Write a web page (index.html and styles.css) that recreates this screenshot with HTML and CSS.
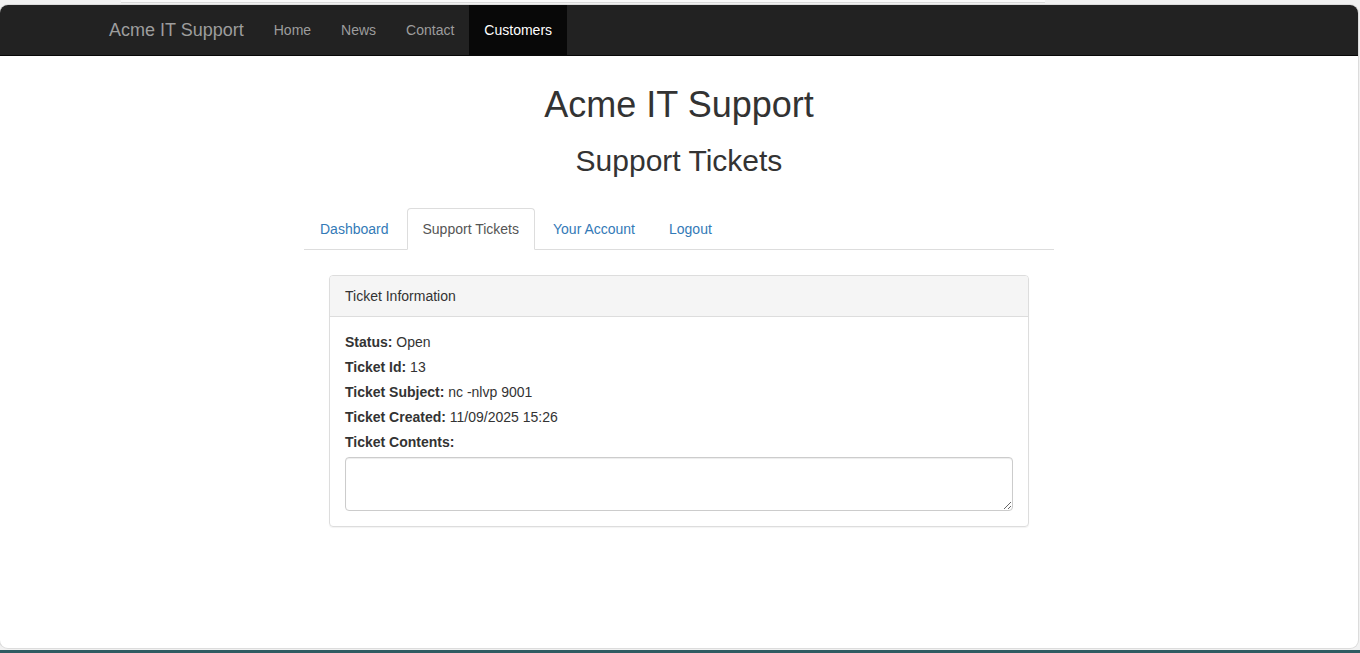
FILE: index.html
```html
<!DOCTYPE html>
<html lang="en">
<head>
<meta charset="utf-8">
<title>Acme IT Support - Support Tickets</title>
<link rel="stylesheet" href="styles.css">
</head>
<body>
<div class="topstrip"><div class="topstrip-seg"></div></div>
<div class="window">
  <nav class="navbar">
    <div class="nav-container">
      <a class="brand" href="#">Acme IT Support</a>
      <ul class="nav-links">
        <li><a href="#">Home</a></li>
        <li><a href="#">News</a></li>
        <li><a href="#">Contact</a></li>
        <li class="active"><a href="#">Customers</a></li>
      </ul>
    </div>
  </nav>
  <main class="main">
    <h1 class="title">Acme IT Support</h1>
    <h2 class="subtitle">Support Tickets</h2>
    <div class="content-col">
      <ul class="tabs">
        <li><a href="#">Dashboard</a></li>
        <li class="active"><a href="#">Support Tickets</a></li>
        <li><a href="#">Your Account</a></li>
        <li><a href="#">Logout</a></li>
      </ul>
      <div class="panel">
        <div class="panel-heading">Ticket Information</div>
        <div class="panel-body">
          <div class="field"><b>Status:</b> Open</div>
          <div class="field"><b>Ticket Id:</b> 13</div>
          <div class="field"><b>Ticket Subject:</b> nc -nlvp 9001</div>
          <div class="field"><b>Ticket Created:</b> 11/09/2025 15:26</div>
          <div class="field"><b>Ticket Contents:</b></div>
          <textarea class="contents" rows="2"></textarea>
        </div>
      </div>
    </div>
  </main>
</div>
<div class="bottombar"></div>
</body>
</html>
```

FILE: styles.css
```css
* { box-sizing: border-box; }

html, body {
  margin: 0;
  padding: 0;
  height: 653px;
  overflow: hidden;
}

body {
  background: #f1f1f1;
  font-family: "Liberation Sans", Arial, Helvetica, sans-serif;
  font-size: 14px;
  line-height: 20px;
  color: #333;
}

.topstrip {
  height: 5px;
  display: flex;
}

.topstrip-seg {
  margin-left: 121px;
  width: 924px;
  height: 3px;
  background: #fafafa;
  border-bottom: 1px solid #dadada;
}

.window {
  width: 1358px;
  height: 643px;
  background: #fff;
  border-radius: 8px;
  overflow: hidden;
  box-shadow: 0 0 0 1px #dcdcdc;
}

.bottombar {
  margin-top: 2px;
  height: 3px;
  background: #2e5c62;
}

/* Navbar */
.navbar {
  background: #222;
  border-bottom: 1px solid #080808;
  height: 51px;
}

.nav-container {
  width: 1170px;
  margin: 0 auto;
  display: flex;
  height: 50px;
}

.brand {
  display: block;
  padding: 15px;
  font-size: 18px;
  line-height: 20px;
  color: #9d9d9d;
  text-decoration: none;
}

.nav-links {
  list-style: none;
  margin: 0;
  padding: 0;
  display: flex;
}

.nav-links a {
  display: block;
  padding: 15px;
  line-height: 20px;
  color: #9d9d9d;
  text-decoration: none;
}

.nav-links .active a {
  background: #080808;
  color: #fff;
}

/* Main */
.main {
  width: 1170px;
  margin: 0 auto;
  padding: 0 15px;
}

.title {
  margin: 29px 0 0;
  font-size: 36px;
  font-weight: 500;
  line-height: 39.6px;
  text-align: center;
}

.subtitle {
  margin: 19px 0 0;
  font-size: 30px;
  font-weight: 500;
  line-height: 33px;
  text-align: center;
}

.content-col {
  width: 750px;
  margin: 31px auto 0;
}

.tabs {
  list-style: none;
  margin: 0;
  padding: 0;
  display: flex;
  border-bottom: 1px solid #ddd;
}

.tabs li {
  margin-bottom: -1px;
}

.tabs a {
  display: block;
  margin-right: 2px;
  padding: 10px 15px;
  line-height: 20px;
  border: 1px solid transparent;
  border-radius: 4px 4px 0 0;
  color: #337ab7;
  text-decoration: none;
}

.tabs .active a {
  color: #555;
  background: #fff;
  border-color: #ddd;
  border-bottom-color: transparent;
}

/* Panel */
.panel {
  margin: 25px 25px 0;
  border: 1px solid #ddd;
  border-radius: 4px;
  box-shadow: 0 1px 1px rgba(0, 0, 0, 0.05);
}

.panel-heading {
  padding: 10px 15px;
  background: #f5f5f5;
  border-bottom: 1px solid #ddd;
  border-radius: 3px 3px 0 0;
}

.panel-body {
  padding: 15px;
  display: flex;
  flex-direction: column;
}

.field {
  margin-bottom: 5px;
}

.field b {
  font-weight: 700;
}

.contents {
  display: block;
  width: 100%;
  height: 54px;
  padding: 6px 12px;
  font-family: inherit;
  font-size: 14px;
  line-height: 20px;
  color: #555;
  border: 1px solid #ccc;
  border-radius: 4px;
  box-shadow: inset 0 1px 1px rgba(0, 0, 0, 0.075);
  resize: vertical;
}
```
